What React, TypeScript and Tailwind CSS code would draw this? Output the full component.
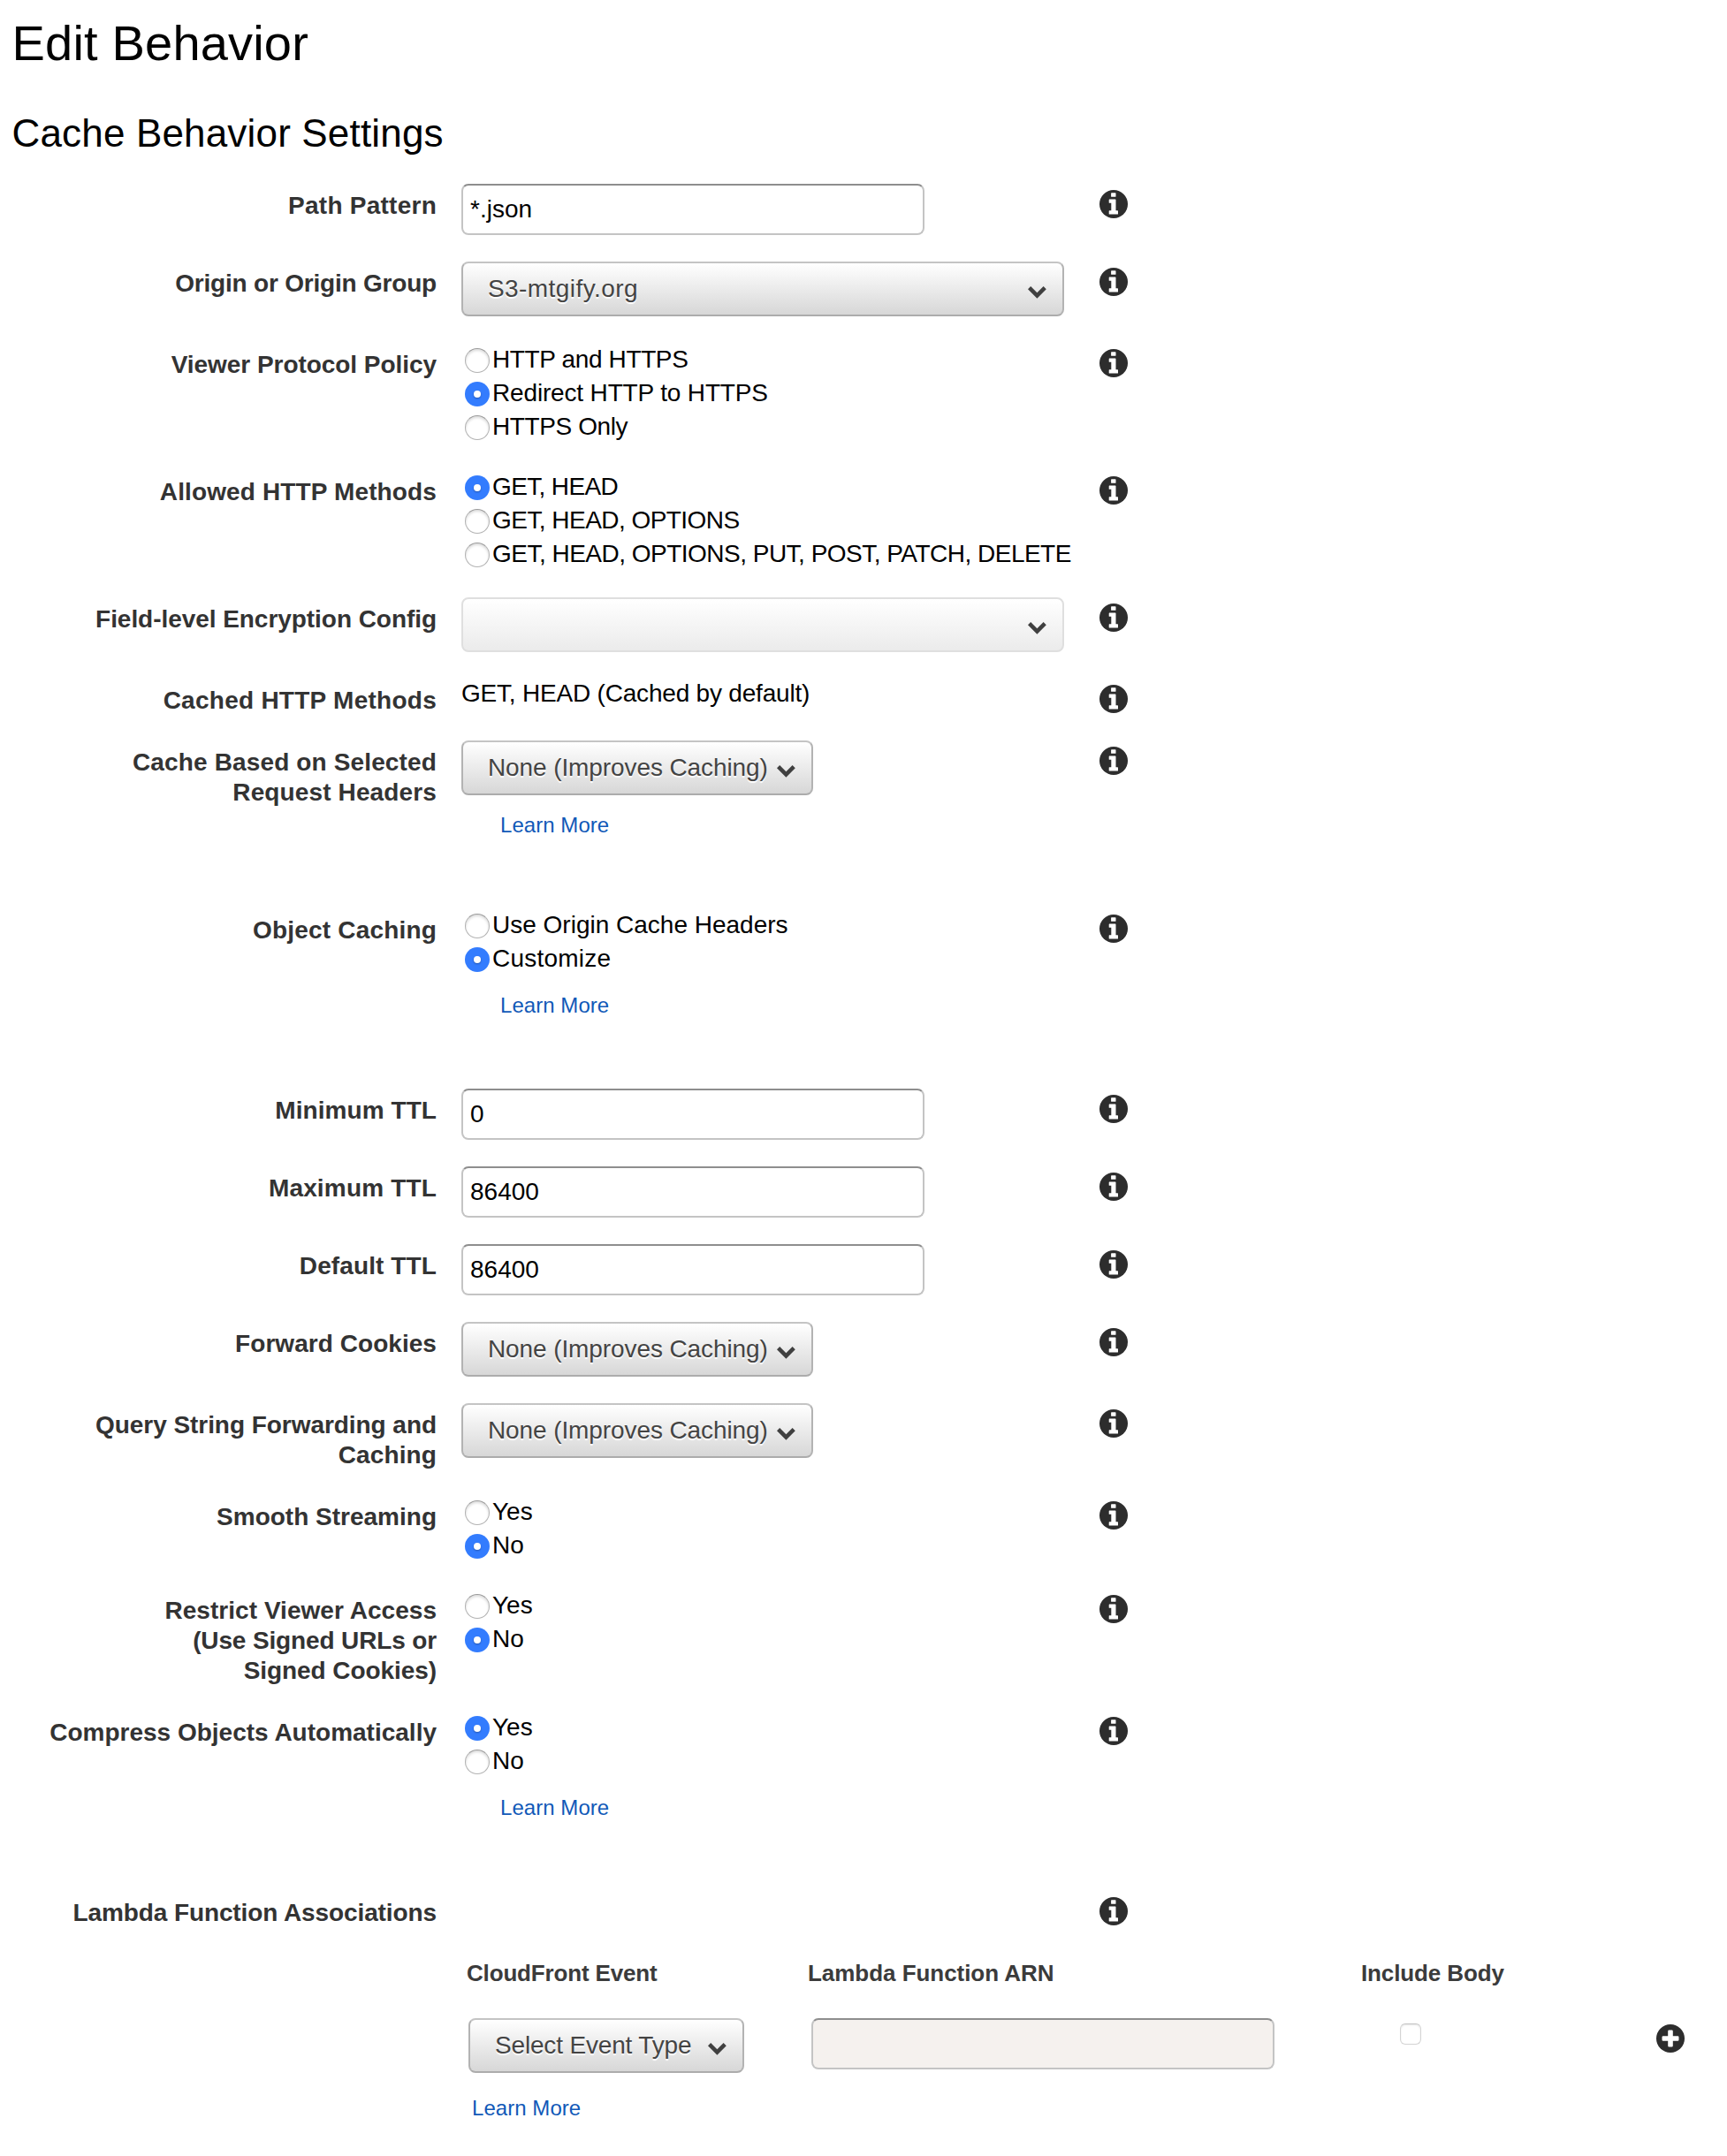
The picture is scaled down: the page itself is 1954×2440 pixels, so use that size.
import React from "react";

const FONT = 'font-["Liberation_Sans",Arial,sans-serif]';

function InfoIcon() {
  return (
    <svg viewBox="0 0 32 32" className="mt-[7px] block h-8 w-8" aria-label="Info">
      <circle cx="16" cy="16" r="16" fill="#2d2d2d" />
      <path
        fill="#fff"
        d="M13.7 3.2h4.2q.6 0 .6.6v3.4q0 .6-.6.6h-4.2q-.6 0-.6-.6V3.8q0-.6.6-.6zM11.3 10.6h6.6q.6 0 .6.6v12h1.9q.6 0 .6.6v3.2q0 .6-.6.6h-9.1q-.6 0-.6-.6v-3.2q0-.6.6-.6h2v-8.4h-2q-.6 0-.6-.6v-3q0-.6.6-.6z"
      />
    </svg>
  );
}

function PlusIcon() {
  return (
    <svg viewBox="0 0 32 32" className="block h-8 w-8" aria-label="Add">
      <circle cx="16" cy="16" r="16" fill="#2d2d2d" />
      <path
        fill="#fff"
        d="M14.4 6.5h3.2q1.2 0 1.2 1.2v5.5h5.5q1.2 0 1.2 1.2v3.2q0 1.2-1.2 1.2h-5.5v5.5q0 1.2-1.2 1.2h-3.2q-1.2 0-1.2-1.2v-5.5H7.7q-1.2 0-1.2-1.2v-3.2q0-1.2 1.2-1.2h5.5V7.7q0-1.2 1.2-1.2z"
      />
    </svg>
  );
}

function Chevron() {
  return (
    <svg viewBox="0 0 21 14" className="mt-[7px] block h-[14px] w-[21px] shrink-0">
      <path fill="#404040" d="M0 3.2 3.2 0l7.2 7.2L17.6 0l3.2 3.2-10.4 10.5z" />
    </svg>
  );
}

function Radio({ text, checked, tracking = "" }: { text: string; checked?: boolean; tracking?: string }) {
  return (
    <label className="flex h-[38px] pl-1">
      <span
        className={
          checked
            ? "mt-1.5 flex h-7 w-7 shrink-0 items-center justify-center rounded-full bg-[#337cfe]"
            : "mt-1.5 h-7 w-7 shrink-0 rounded-full border border-[#b2b2b2] border-t-[#9a9a9a] bg-white shadow-[inset_0_2px_3px_rgba(0,0,0,0.14)]"
        }
      >
        {checked && <span className="h-2 w-2 rounded-full bg-white shadow-[0_1px_2px_rgba(0,0,0,0.3)]" />}
      </span>
      <span className={`ml-[3px] whitespace-nowrap leading-[37px] text-black ${tracking}`}>{text}</span>
    </label>
  );
}

function TextBox({ value = "", disabled }: { value?: string; disabled?: boolean }) {
  return (
    <input
      readOnly
      value={value}
      className={`block h-[58px] w-[524px] rounded-lg border-2 border-[#c4c4c4] border-t-[#8e8e8e] px-2 text-black outline-none ${
        disabled ? "bg-[#f5f1ee]" : "bg-white"
      }`}
    />
  );
}

function Select({ text = "", width, tracking = "", disabled }: { text?: string; width: string; tracking?: string; disabled?: boolean }) {
  return (
    <div
      className={`flex h-[62px] items-center justify-between rounded-lg border-2 bg-linear-to-b from-white pr-[18px] pl-7 ${width} ${
        disabled
          ? "border-[#dfdfdf] to-[#ebebeb]"
          : "border-[#b3b3b3] border-t-[#c4c4c4] border-b-[#acacac] to-[#d7d7d7]"
      }`}
    >
      <span className={`whitespace-nowrap pb-px leading-[34px] text-[#444] [text-shadow:0_2px_1px_#fff] ${tracking}`}>{text}</span>
      <Chevron />
    </div>
  );
}

function LearnMore({ className = "" }: { className?: string }) {
  return (
    <a href="#" className={`block w-fit text-2xl leading-[30px] tracking-[0.05px] text-[#1159b8] ${className}`}>
      Learn More
    </a>
  );
}

type Line = [text: string, tracking: string];

function Row({ label, height, children }: { label: Line[]; height: string; children?: React.ReactNode }) {
  return (
    <div className={`grid grid-cols-[494px_750px_32px] items-start ${height}`}>
      <div className="pt-2 text-right font-bold leading-[34px] text-[#333]">
        {label.map(([text, tracking]) => (
          <div key={text} className={`whitespace-nowrap ${tracking}`}>
            {text}
          </div>
        ))}
      </div>
      <div className="pl-7">{children}</div>
      <InfoIcon />
    </div>
  );
}

export default function App() {
  return (
    <main className={`min-h-[2440px] w-[1954px] bg-white text-[28px] text-black ${FONT}`}>
      <h1 className="pt-[17px] pl-[13.5px] text-[56px] leading-[64px] tracking-[0.19px]">Edit Behavior</h1>
      <h2 className="mt-[45px] mb-8 pl-[13.5px] text-[44px] leading-[50px] tracking-[0.17px]">Cache Behavior Settings</h2>

      <Row label={[["Path Pattern", "tracking-[0.25px]"]]} height="h-[88px]">
        <TextBox value="*.json" />
      </Row>
      <Row label={[["Origin or Origin Group", "tracking-[-0.2px]"]]} height="h-[92px]">
        <Select text="S3-mtgify.org" width="w-[682px]" tracking="tracking-[0.43px]" />
      </Row>
      <Row label={[["Viewer Protocol Policy", "tracking-[-0.05px]"]]} height="h-36">
        <Radio text="HTTP and HTTPS" tracking="tracking-[-0.37px]" />
        <Radio text="Redirect HTTP to HTTPS" tracking="tracking-[-0.16px]" checked />
        <Radio text="HTTPS Only" tracking="tracking-[-0.4px]" />
      </Row>
      <Row label={[["Allowed HTTP Methods", "tracking-[0.13px]"]]} height="h-36">
        <Radio text="GET, HEAD" tracking="tracking-[-0.64px]" checked />
        <Radio text="GET, HEAD, OPTIONS" tracking="tracking-[-0.54px]" />
        <Radio text="GET, HEAD, OPTIONS, PUT, POST, PATCH, DELETE" tracking="tracking-[-0.51px]" />
      </Row>
      <Row label={[["Field-level Encryption Config", "tracking-[-0.05px]"]]} height="h-[92px]">
        <Select width="w-[682px]" disabled />
      </Row>
      <Row label={[["Cached HTTP Methods", "tracking-[0.26px]"]]} height="h-[70px]">
        <div className="leading-[34px] tracking-[-0.2px]">GET, HEAD (Cached by default)</div>
      </Row>
      <Row
        label={[
          ["Cache Based on Selected", "tracking-[0.14px]"],
          ["Request Headers", "tracking-[0.13px]"],
        ]}
        height="h-[190px]"
      >
        <Select text="None (Improves Caching)" width="w-[398px]" tracking="tracking-[-0.1px]" />
        <LearnMore className="mt-[19px] ml-11" />
      </Row>
      <Row label={[["Object Caching", "tracking-[0.18px]"]]} height="h-[204px]">
        <Radio text="Use Origin Cache Headers" />
        <Radio text="Customize" tracking="tracking-[0.23px]" checked />
        <LearnMore className="mt-[19px] ml-11" />
      </Row>
      <Row label={[["Minimum TTL", "tracking-[0.06px]"]]} height="h-[88px]">
        <TextBox value="0" />
      </Row>
      <Row label={[["Maximum TTL", "tracking-[0.17px]"]]} height="h-[88px]">
        <TextBox value="86400" />
      </Row>
      <Row label={[["Default TTL", "tracking-[0.11px]"]]} height="h-[88px]">
        <TextBox value="86400" />
      </Row>
      <Row label={[["Forward Cookies", "tracking-[0.05px]"]]} height="h-[92px]">
        <Select text="None (Improves Caching)" width="w-[398px]" tracking="tracking-[-0.1px]" />
      </Row>
      <Row
        label={[
          ["Query String Forwarding and", "tracking-[-0.05px]"],
          ["Caching", "tracking-[0.11px]"],
        ]}
        height="h-[104px]"
      >
        <Select text="None (Improves Caching)" width="w-[398px]" tracking="tracking-[-0.1px]" />
      </Row>
      <Row label={[["Smooth Streaming", "tracking-normal"]]} height="h-[106px]">
        <Radio text="Yes" />
        <Radio text="No" checked />
      </Row>
      <Row
        label={[
          ["Restrict Viewer Access", "tracking-[0.04px]"],
          ["(Use Signed URLs or", "tracking-[-0.14px]"],
          ["Signed Cookies)", "tracking-[-0.07px]"],
        ]}
        height="h-[138px]"
      >
        <Radio text="Yes" />
        <Radio text="No" checked />
      </Row>
      <Row label={[["Compress Objects Automatically", "tracking-normal"]]} height="h-[204px]">
        <Radio text="Yes" checked />
        <Radio text="No" />
        <LearnMore className="mt-[19px] ml-11" />
      </Row>
      <Row label={[["Lambda Function Associations", "tracking-[-0.1px]"]]} height="h-[70px]" />

      <section className="pl-[528px]">
        <div className="grid h-[74px] grid-cols-[386px_626px_200px] pt-[7px] text-[26px] leading-[32px] font-bold text-[#3b3b3b]">
          <div className="tracking-[-0.16px]">CloudFront Event</div>
          <div className="tracking-[-0.04px]">Lambda Function ARN</div>
          <div className="tracking-[-0.12px]">Include Body</div>
        </div>
        <div className="flex items-start pl-0.5">
          <Select text="Select Event Type" width="w-[312px]" tracking="tracking-[-0.17px]" />
          <div className="ml-[76px]">
            <TextBox disabled />
          </div>
          <div className="mt-1.5 ml-[142px] h-6 w-6 rounded-[6px] border border-[#d4d4d4] border-t-[#c2c2c2] bg-white shadow-[inset_0_1px_2px_rgba(0,0,0,0.1)]" />
          <div className="mt-[6.5px] ml-[266px]">
            <PlusIcon />
          </div>
        </div>
        <LearnMore className="mt-[25px] ml-1.5" />
      </section>
    </main>
  );
}
